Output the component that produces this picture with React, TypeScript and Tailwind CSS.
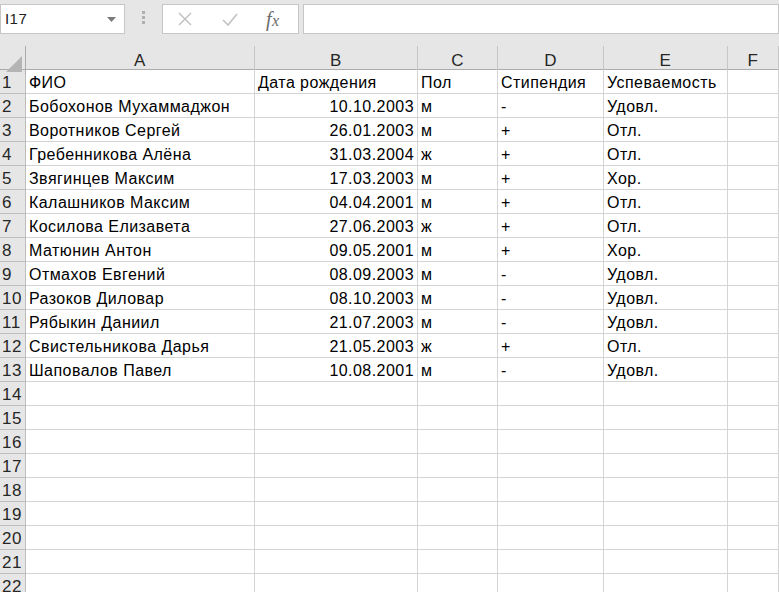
import React from 'react';

type Row = [string, string, string, string, string];

const data: Row[] = [
  ['ФИО', 'Дата рождения', 'Пол', 'Стипендия', 'Успеваемость'],
  ['Бобохонов Мухаммаджон', '10.10.2003', 'м', '-', 'Удовл.'],
  ['Воротников Сергей', '26.01.2003', 'м', '+', 'Отл.'],
  ['Гребенникова Алёна', '31.03.2004', 'ж', '+', 'Отл.'],
  ['Звягинцев Максим', '17.03.2003', 'м', '+', 'Хор.'],
  ['Калашников Максим', '04.04.2001', 'м', '+', 'Отл.'],
  ['Косилова Елизавета', '27.06.2003', 'ж', '+', 'Отл.'],
  ['Матюнин Антон', '09.05.2001', 'м', '+', 'Хор.'],
  ['Отмахов Евгений', '08.09.2003', 'м', '-', 'Удовл.'],
  ['Разоков Диловар', '08.10.2003', 'м', '-', 'Удовл.'],
  ['Рябыкин Даниил', '21.07.2003', 'м', '-', 'Удовл.'],
  ['Свистельникова Дарья', '21.05.2003', 'ж', '+', 'Отл.'],
  ['Шаповалов Павел', '10.08.2001', 'м', '-', 'Удовл.'],
];

const TOTAL_ROWS = 22;
const grid = 'grid grid-cols-[26px_229px_163px_80px_106px_124px_1fr]';

function FormulaBar() {
  return (
    <div className="flex h-[46px] items-start bg-[#e6e6e6] pt-[4px]">
      <div className="flex h-[30px] w-[125px] items-center justify-between border border-[#c6c6c6] bg-white pl-[4px] pr-[8px] text-[15px] text-[#222]">
        <span>I17</span>
        <svg width="9" height="5" viewBox="0 0 9 5">
          <path d="M0 0 L9 0 L4.5 5 Z" fill="#7a7a7a" />
        </svg>
      </div>
      <div className="flex w-[37px] flex-col items-center justify-center gap-[2px] pt-[7px]">
        <span className="h-[3px] w-[3px] bg-[#b0b0b0]" />
        <span className="h-[3px] w-[3px] bg-[#b0b0b0]" />
        <span className="h-[3px] w-[3px] bg-[#b0b0b0]" />
      </div>
      <div className="flex h-[30px] w-[137px] items-center border border-[#c6c6c6] bg-white">
        <svg className="ml-[15px]" width="14" height="14" viewBox="0 0 14 14">
          <path d="M1 1 L13 13 M13 1 L1 13" stroke="#c2c2c2" strokeWidth="1.5" />
        </svg>
        <svg className="ml-[30px]" width="16" height="13" viewBox="0 0 16 13">
          <path d="M1 7 L6 12 L15 1" stroke="#c2c2c2" strokeWidth="1.6" fill="none" />
        </svg>
        <span className="ml-[28px] font-['Liberation_Serif',serif] text-[20px] italic leading-none text-[#6b6b6b]">
          f<span className="text-[16px]">x</span>
        </span>
      </div>
      <div className="ml-[4px] h-[30px] flex-1 border border-[#c6c6c6] bg-white" />
    </div>
  );
}

function ColumnHeaders() {
  const cols = ['A', 'B', 'C', 'D', 'E', 'F'];
  return (
    <div className={`${grid} h-[24px] border-b border-[#ababab] bg-[#e6e6e6]`}>
      <div className="relative border-r border-[#ababab]">
        <svg className="absolute bottom-[2px] right-[3px]" width="16" height="16" viewBox="0 0 16 16">
          <path d="M16 0 L16 16 L0 16 Z" fill="#b4b4b4" />
        </svg>
      </div>
      {cols.map((c) => (
        <div
          key={c}
          className="flex items-center justify-center border-r border-[#c6c6c6] pt-[2px] text-[17px] text-[#262626]"
        >
          {c}
        </div>
      ))}
    </div>
  );
}

function SheetRow({ index, row }: { index: number; row?: Row }) {
  const cell = 'h-[24px] border-b border-r border-[#d4d4d4] px-[3px] pt-[1px] leading-[23px] whitespace-nowrap overflow-hidden';
  return (
    <div className={grid}>
      <div className="h-[24px] border-b border-r border-[#bdbdbd] bg-[#e6e6e6] pl-[2px] pt-[1px] text-[17px] leading-[23px] text-[#262626]">
        {index}
      </div>
      <div className={cell}>{row?.[0]}</div>
      <div className={`${cell} ${index === 1 ? 'text-left' : 'text-right'}`}>{row?.[1]}</div>
      <div className={cell}>{row?.[2]}</div>
      <div className={cell}>{row?.[3]}</div>
      <div className={cell}>{row?.[4]}</div>
      <div className={cell} />
    </div>
  );
}

export default function App() {
  return (
    <div className="h-[592px] w-[779px] overflow-hidden bg-white font-['Liberation_Sans',sans-serif] text-[16px] tracking-[0.45px] text-black">
      <FormulaBar />
      <ColumnHeaders />
      {Array.from({ length: TOTAL_ROWS }, (_, i) => (
        <SheetRow key={i} index={i + 1} row={data[i]} />
      ))}
    </div>
  );
}
